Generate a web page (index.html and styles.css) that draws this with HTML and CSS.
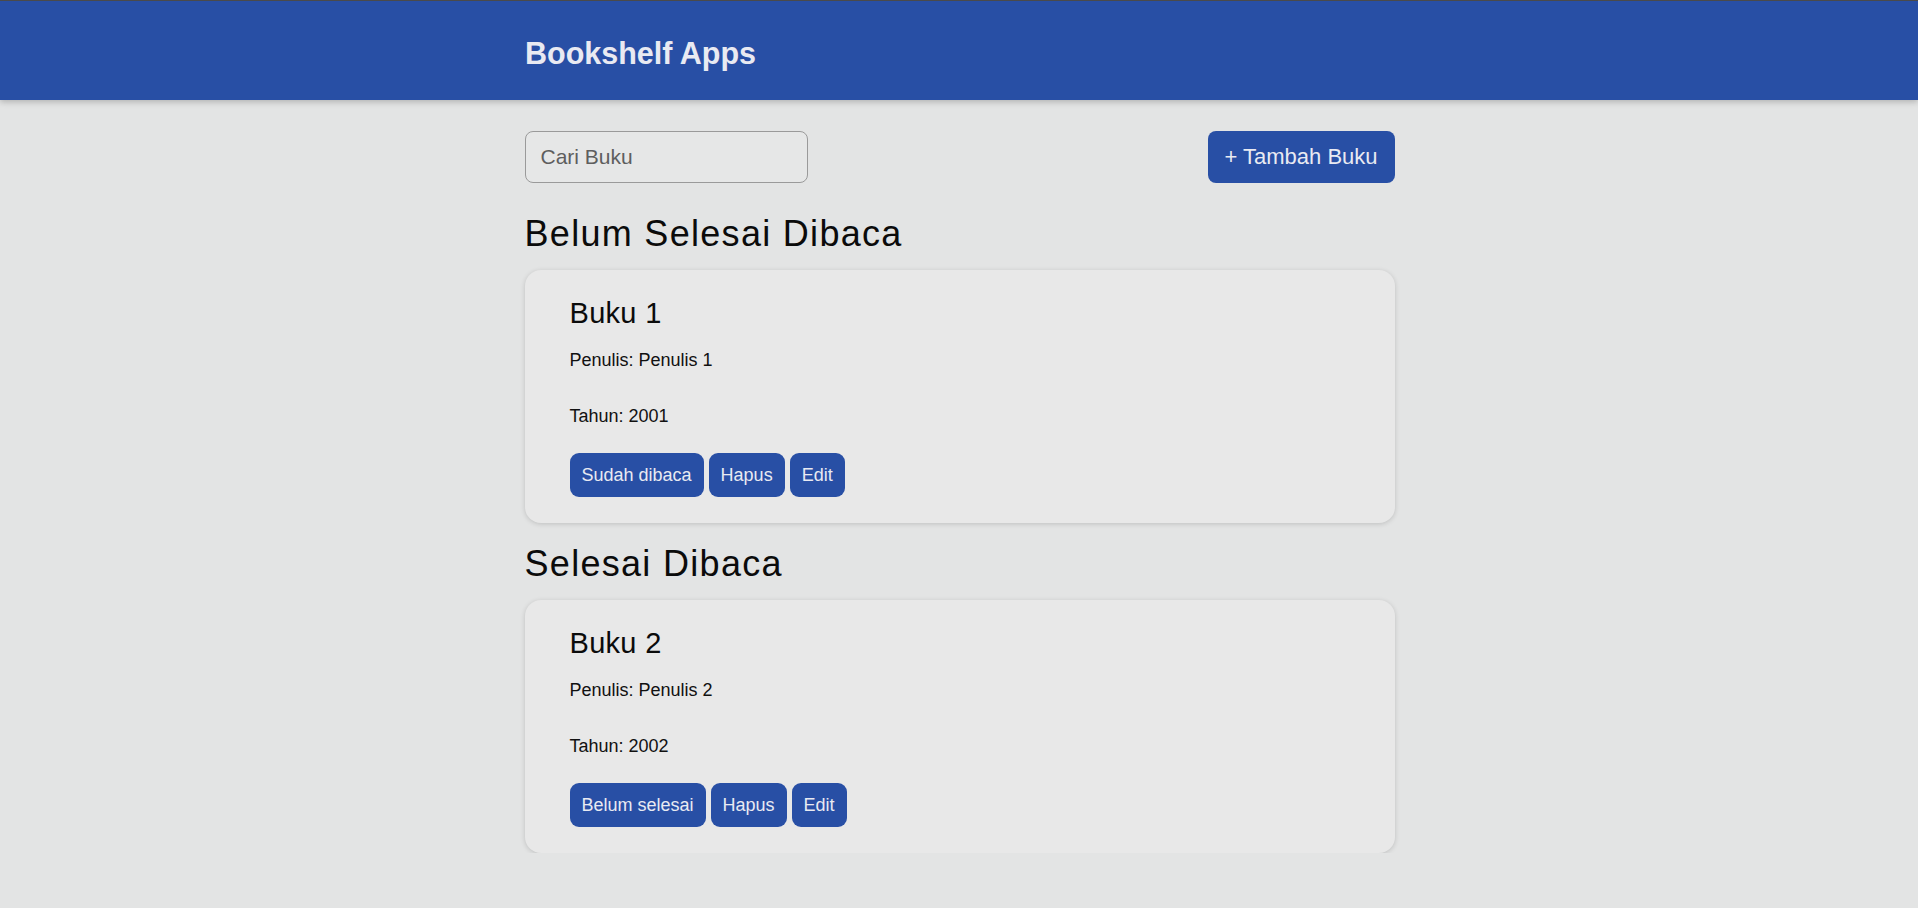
FILE: index.html
```html
<!DOCTYPE html>
<html lang="id">
<head>
<meta charset="utf-8">
<title>Bookshelf Apps</title>
<link rel="stylesheet" href="styles.css">
</head>
<body>
<header class="app-header">
  <div class="wrap">
    <h1 class="app-title">Bookshelf Apps</h1>
  </div>
</header>
<main class="wrap">
  <div class="toolbar">
    <input class="search" type="text" placeholder="Cari Buku">
    <button class="btn-add">+ Tambah Buku</button>
  </div>
  <section class="shelf">
    <h2 class="shelf-title">Belum Selesai Dibaca</h2>
    <article class="book">
      <h3 class="book-title">Buku 1</h3>
      <p class="book-meta">Penulis: Penulis 1</p>
      <p class="book-meta year">Tahun: 2001</p>
      <div class="actions">
        <button class="btn">Sudah dibaca</button>
        <button class="btn">Hapus</button>
        <button class="btn">Edit</button>
      </div>
    </article>
  </section>
  <section class="shelf">
    <h2 class="shelf-title">Selesai Dibaca</h2>
    <article class="book">
      <h3 class="book-title">Buku 2</h3>
      <p class="book-meta">Penulis: Penulis 2</p>
      <p class="book-meta year">Tahun: 2002</p>
      <div class="actions">
        <button class="btn">Belum selesai</button>
        <button class="btn">Hapus</button>
        <button class="btn">Edit</button>
      </div>
    </article>
  </section>
</main>
</body>
</html>
```
FILE: styles.css
```css
* { box-sizing: border-box; }
html, body {
  margin: 0;
  padding: 0;
  background: #e3e4e4;
  font-family: "Liberation Sans", Arial, sans-serif;
  color: #111;
}
.wrap {
  width: 870px;
  margin: 0 auto;
  padding-left: 1px;
}
main.wrap { padding-left: 0; width: 871px; padding-left: 1px; }
.app-header {
  height: 100px;
  background: #284fa5;
  border-top: 1px solid #4a4a4a;
  padding-top: 34px;
  box-shadow: 0 2px 6px rgba(0, 0, 0, 0.22);
}
.app-title {
  margin: 0;
  font-size: 30.5px;
  line-height: 36px;
  font-weight: 700;
  color: #e9eaf2;
}
.toolbar {
  margin-top: 31px;
  display: flex;
  justify-content: space-between;
  align-items: center;
}
.search {
  width: 283px;
  height: 52px;
  border: 1px solid #9a9a9a;
  border-radius: 8px;
  background: #e6e7e7;
  padding: 0 15px;
  font-family: inherit;
  font-size: 21px;
  color: #333;
  outline: none;
}
.search::placeholder { color: #5e5e5e; }
.btn-add {
  width: 187px;
  height: 52px;
  border: none;
  border-radius: 8px;
  background: #284fa5;
  color: #e9eaf2;
  font-family: inherit;
  font-size: 22px;
  padding: 0;
}
.shelf-title {
  margin: 29px 0 14px;
  font-size: 36px;
  line-height: 44px;
  font-weight: 400;
  letter-spacing: 1.3px;
  color: #0b0b0b;
}
.shelf + .shelf .shelf-title { margin-top: 19px; }
.book {
  background: #e8e8e8;
  border-radius: 16px;
  box-shadow: 0 1px 5px rgba(0, 0, 0, 0.16);
  padding: 26px 45px 26px;
}
.book-title {
  margin: 0;
  font-size: 29px;
  line-height: 34px;
  font-weight: 400;
  letter-spacing: 0.3px;
  color: #0b0b0b;
}
.book-meta {
  margin: 19px 0 0;
  font-size: 18px;
  line-height: 22px;
  color: #111;
}
.book-meta.year { margin-top: 34px; }
.actions {
  margin-top: 26px;
  display: flex;
  gap: 5px;
}
.btn {
  height: 44px;
  padding: 0 12px;
  border: none;
  border-radius: 9px;
  background: #284fa5;
  color: #e9eaf2;
  font-family: inherit;
  font-size: 18px;
}
```
